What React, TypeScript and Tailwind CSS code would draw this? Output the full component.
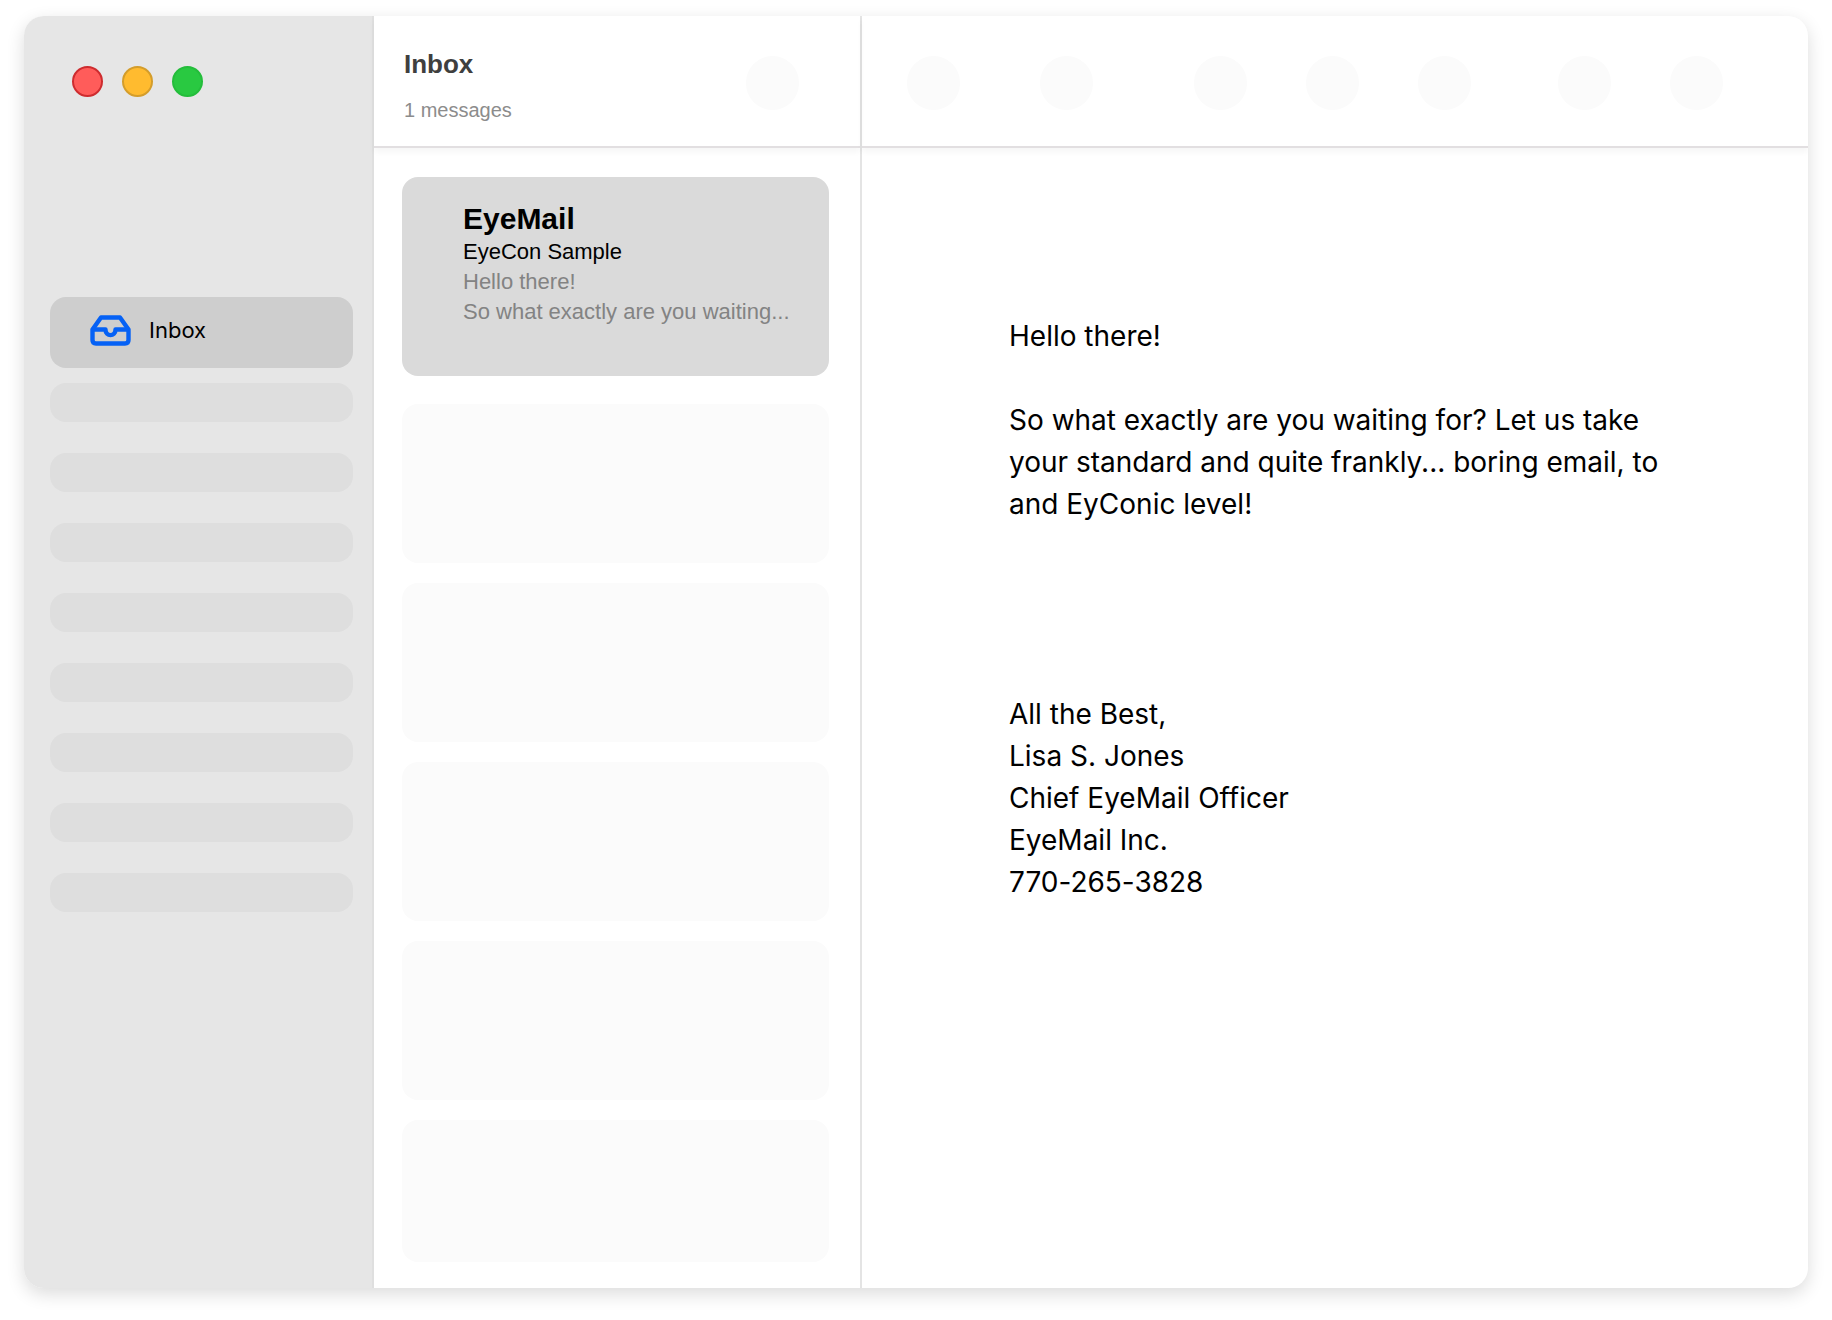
import type { ReactNode } from "react";

const folders = ["Drafts", "Sent", "Junk", "Trash", "Archive", "Flagged", "Notes", "Other"];

const toolbarGroups = [["archive"], ["reply"], ["flag", "move", "copy"], ["search", "more"]];

function InboxIcon() {
  return (
    <svg
      width="41"
      height="31"
      viewBox="0 0 41 31"
      fill="none"
      stroke="#0561f5"
      strokeWidth="4.4"
      strokeLinejoin="round"
      aria-hidden="true"
    >
      <path d="M2.500 14.500L11 2.500H30L38.500 14.500V25Q38.500 28.500 35 28.500H6Q2.500 28.500 2.500 25Z" />
      <path d="M2.500 14.500H15.500C15.500 22 25.500 22 25.500 14.500H38.500" />
    </svg>
  );
}

function RoundButton({ label }: { label: string }) {
  return (
    <button
      type="button"
      aria-label={label}
      className="h-[54px] w-[53px] shrink-0 rounded-full bg-[#fbfbfb]"
    />
  );
}

function Header({ children }: { children: ReactNode }) {
  return (
    <header className="flex h-[132px] shrink-0 border-b-2 border-[#e2dfe1] shadow-[0_4px_6px_rgba(0,0,0,0.04)]">
      {children}
    </header>
  );
}

function Sidebar() {
  return (
    <aside className="w-[350px] shrink-0 border-r-2 border-[#dfdfdf] bg-[#e6e6e6] pr-[19px] pl-[26px]">
      {/* Window controls */}
      <div className="flex gap-[19px] pt-[50px] pl-[22px]">
        <button
          type="button"
          aria-label="Close"
          className="size-[31px] rounded-full border-2 border-[#ce2c2f] bg-[#ff5c5a]"
        />
        <button
          type="button"
          aria-label="Minimize"
          className="size-[31px] rounded-full border-2 border-[#d49d2b] bg-[#ffbb2f]"
        />
        <button
          type="button"
          aria-label="Zoom"
          className="size-[31px] rounded-full border-2 border-[#24bd3b] bg-[#29c941]"
        />
      </div>

      <nav className="mt-[200px]">
        <a
          href="#inbox"
          className="flex h-[71px] items-center gap-[18px] rounded-2xl bg-[#cecece] pb-1 pl-10 font-[Inter,sans-serif] text-[22px] text-black"
        >
          <InboxIcon />
          Inbox
        </a>
        <ul className="mt-[15px] flex flex-col gap-[31px]">
          {folders.map((name) => (
            <li key={name}>
              <a
                href="#folder"
                aria-label={name}
                className="block h-[39px] rounded-2xl bg-[#dedede]"
              />
            </li>
          ))}
        </ul>
      </nav>
    </aside>
  );
}

function MessageList() {
  return (
    <section className="flex w-[488px] shrink-0 flex-col border-r-2 border-[#e4e4e4]">
      <Header>
        <div className="flex-1 pt-8 pl-[30px]">
          <h1 className="text-[26px] leading-8 font-bold text-[#3f3f3f]">Inbox</h1>
          <p className="mt-4 text-[20px] leading-7 text-[#8c8c8c]">1 messages</p>
        </div>
        <div className="pt-10 pr-[61px]">
          <RoundButton label="Filter" />
        </div>
      </Header>

      <div className="flex flex-1 flex-col gap-5 pt-[29px] pr-[31px] pb-[26px] pl-7">
        <article className="mb-2 h-[199px] rounded-2xl bg-[#dadada] pt-6 pl-[61px] text-[22px] leading-[30px]">
          <h2 className="text-[30px] leading-9 font-bold text-black">EyeMail</h2>
          <p className="text-black">EyeCon Sample</p>
          <p className="text-[#838383]">Hello there!</p>
          <p className="truncate text-[#838383]">So what exactly are you waiting...</p>
        </article>
        <div className="h-[159px] rounded-2xl bg-[#fbfbfb]" />
        <div className="h-[159px] rounded-2xl bg-[#fbfbfb]" />
        <div className="h-[159px] rounded-2xl bg-[#fbfbfb]" />
        <div className="h-[159px] rounded-2xl bg-[#fbfbfb]" />
        <div className="h-[142px] rounded-2xl bg-[#fbfbfb]" />
      </div>
    </section>
  );
}

function MessageView() {
  return (
    <main className="flex min-w-0 flex-1 flex-col">
      <Header>
        <div className="flex flex-1 items-start pt-10 pl-[45px]">
          {toolbarGroups.map((group) => (
            <div key={group[0]} className="mr-[80px] flex gap-[59px] nth-2:mr-[101px] nth-3:mr-[87px]">
              {group.map((label) => (
                <RoundButton key={label} label={label} />
              ))}
            </div>
          ))}
        </div>
      </Header>

      <div className="pt-[167px] pr-[140px] pl-[147px] font-[Inter,sans-serif] text-[28px] leading-[42px] text-black [font-variant-ligatures:none]">
        <p>Hello there!</p>
        <p className="mt-[42px]">
          So what exactly are you waiting for? Let us take your standard and quite frankly... boring
          email, to and EyConic level!
        </p>
        <address className="mt-[168px] not-italic">
          All the Best,
          <br />
          Lisa S. Jones
          <br />
          Chief EyeMail Officer
          <br />
          EyeMail Inc.
          <br />
          770-265-3828
        </address>
      </div>
    </main>
  );
}

export default function App() {
  return (
    <div className="min-h-screen bg-white px-6 pt-4 pb-8 font-['Liberation_Sans',Arial,sans-serif]">
      <div className="flex overflow-hidden rounded-[20px] bg-white shadow-[0_6px_18px_rgba(0,0,0,0.14)]">
        <Sidebar />
        <MessageList />
        <MessageView />
      </div>
    </div>
  );
}
